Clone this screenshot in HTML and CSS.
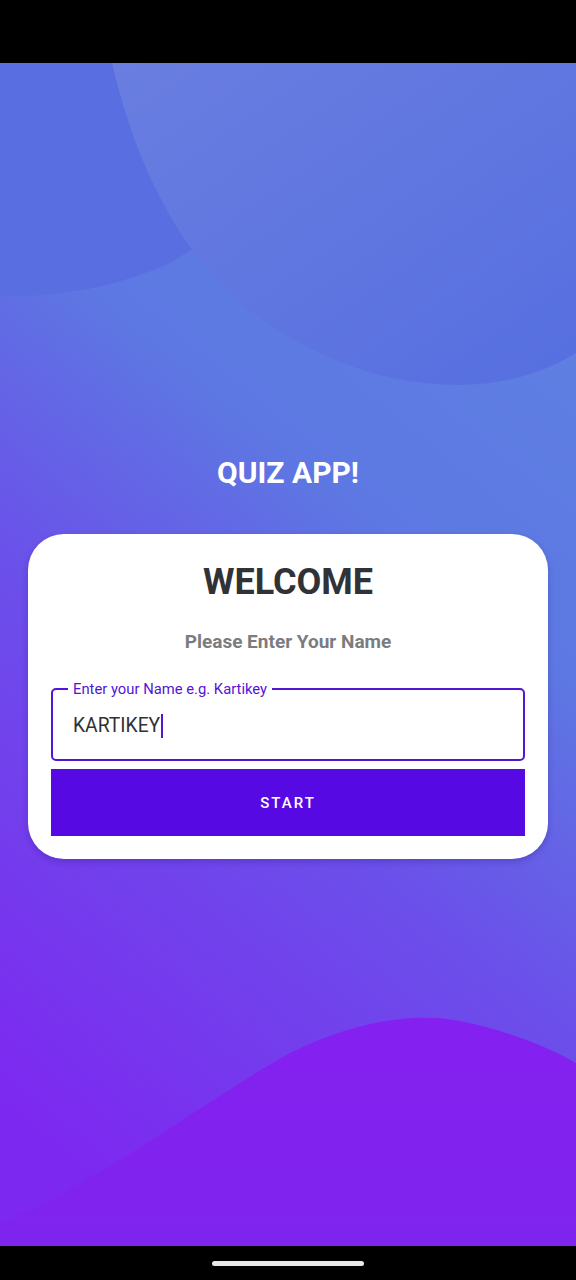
FILE: index.html
```html
<!DOCTYPE html>
<html>
<head>
<meta charset="utf-8">
<link rel="stylesheet" href="styles.css">
</head>
<body>
<div class="phone">
  <div class="status-bar"></div>
  <main class="screen">
    <svg class="bg" viewBox="0 0 576 1183" preserveAspectRatio="none" xmlns="http://www.w3.org/2000/svg">
      <defs>
        <linearGradient id="base" x1="0.7" y1="0" x2="0.3" y2="1">
          <stop offset="0" stop-color="#5f82e2"/>
          <stop offset="0.35" stop-color="#5d78e2"/>
          <stop offset="0.6" stop-color="#6b50ea"/>
          <stop offset="1" stop-color="#7d28f0"/>
        </linearGradient>
        <linearGradient id="blob" x1="0" y1="0" x2="1" y2="1">
          <stop offset="0" stop-color="#6a7ee0"/>
          <stop offset="1" stop-color="#566fe0"/>
        </linearGradient>
        <linearGradient id="wave" x1="0" y1="0" x2="0" y2="1">
          <stop offset="0" stop-color="#8520f0"/>
          <stop offset="1" stop-color="#7f24ee"/>
        </linearGradient>
      </defs>
      <rect x="0" y="0" width="576" height="1183" fill="url(#base)"/>
      <path d="M0 0 L0 232 C60 236 120 222 170 200 L250 150 L250 0 Z" fill="#596ee0"/>
      <path d="M112 0 C140 120 190 200 250 248 C320 300 390 322 460 322 C510 322 550 306 576 290 L576 0 Z" fill="url(#blob)"/>
      <path d="M0 1160 C100 1120 200 1040 290 990 C360 955 420 950 460 958 C510 968 550 985 576 1000 L576 1183 L0 1183 Z" fill="url(#wave)"/>
    </svg>
    <h1 class="app-title">QUIZ APP!</h1>
    <section class="card">
      <h2 class="welcome">WELCOME</h2>
      <p class="prompt">Please Enter Your Name</p>
      <div class="field">
        <span class="field-label">Enter your Name e.g. Kartikey</span>
        <div class="field-value">KARTIKEY<span class="cursor"></span></div>
      </div>
      <button class="start-btn">START</button>
    </section>
  </main>
  <div class="nav-bar"><span class="pill"></span></div>
</div>
</body>
</html>
```

FILE: styles.css
```css
* { box-sizing: border-box; }
html, body { margin: 0; padding: 0; }
body {
  width: 576px;
  height: 1280px;
  overflow: hidden;
  font-family: Roboto, "Noto Sans", sans-serif;
  background: #000;
}
.phone {
  width: 576px;
  height: 1280px;
  display: flex;
  flex-direction: column;
}
.status-bar {
  height: 63px;
  background: #000;
  flex: none;
}
.screen {
  position: relative;
  height: 1183px;
  flex: none;
  display: flex;
  flex-direction: column;
  align-items: center;
  padding-top: 391px;
  overflow: hidden;
}
.bg {
  position: absolute;
  left: 0;
  top: 0;
  width: 576px;
  height: 1183px;
  z-index: 0;
}
.app-title {
  position: relative;
  z-index: 1;
  margin: 0;
  color: #fff;
  font-size: 30px;
  font-weight: 700;
  line-height: 38px;
}
.card {
  position: relative;
  z-index: 1;
  margin-top: 42px;
  width: 520px;
  background: #fff;
  border-radius: 36px;
  padding: 27px 23px 23px;
  display: flex;
  flex-direction: column;
  align-items: stretch;
  box-shadow: 0 3px 6px rgba(40, 20, 120, 0.25);
}
.welcome {
  margin: 0;
  text-align: center;
  font-size: 36px;
  font-weight: 700;
  line-height: 42px;
  color: #303236;
}
.prompt {
  margin: 27px 0 0;
  text-align: center;
  font-size: 19px;
  font-weight: 700;
  line-height: 24px;
  color: #7a7c80;
}
.field {
  position: relative;
  margin-top: 34px;
  height: 73px;
  border: 2.5px solid #5314d6;
  border-radius: 5px;
  display: flex;
  align-items: center;
  padding-left: 20px;
}
.field-label {
  position: absolute;
  left: 15px;
  top: -10px;
  padding: 0 5px;
  background: #fff;
  color: #5314d6;
  font-size: 14.8px;
  line-height: 18px;
}
.field-value {
  display: flex;
  align-items: center;
  font-size: 19.3px;
  color: #303236;
  line-height: 24px;
  margin-top: 3px;
}
.cursor {
  display: inline-block;
  width: 2px;
  height: 24px;
  background: #5314d6;
  margin-left: 1px;
}
.start-btn {
  margin-top: 8px;
  height: 67px;
  border: none;
  background: #5709e3;
  color: #fff;
  font-family: Roboto, "Noto Sans", sans-serif;
  font-size: 15px;
  font-weight: 500;
  letter-spacing: 2px;
  padding: 0;
}
.nav-bar {
  height: 34px;
  background: #000;
  flex: none;
  display: flex;
  justify-content: center;
  align-items: center;
}
.pill {
  width: 152px;
  height: 5px;
  border-radius: 3px;
  background: #e8e8e8;
}
```
